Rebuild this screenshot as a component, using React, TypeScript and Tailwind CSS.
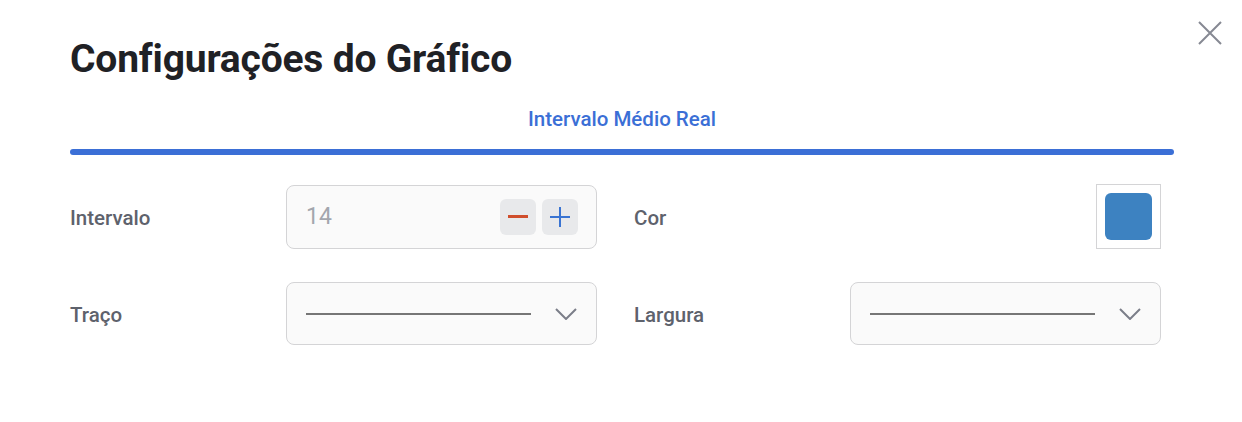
import React, { useState } from 'react';

const Chevron = () => (
  <svg width="22" height="12" viewBox="0 0 22 12" fill="none">
    <path d="M1 1l10 10L21 1" stroke="#7b7e89" strokeWidth="2" />
  </svg>
);

const LineSelect: React.FC = () => (
  <div className="w-[311px] h-[63px] rounded-lg border border-[#d4d4d6] bg-[#fafafa] flex items-center pl-[19px] pr-[19px]">
    <div className="w-[225px] h-[2px] bg-[#767676]" />
    <div className="ml-auto flex items-center">
      <Chevron />
    </div>
  </div>
);

const App: React.FC = () => {
  const [interval, setInterval] = useState(14);

  return (
    <div
      className="w-[1242px] h-[422px] bg-white relative"
      style={{ fontFamily: 'Roboto, "Liberation Sans", sans-serif' }}
    >
      {/* close */}
      <button className="absolute left-[1197px] top-[20px] w-[26px] h-[26px] flex items-center justify-center">
        <svg width="26" height="26" viewBox="0 0 26 26" fill="none">
          <path d="M2 2l22 22M24 2L2 24" stroke="#868993" strokeWidth="2" />
        </svg>
      </button>

      <div className="pl-[70px] pr-[68px] pt-[33px]">
        <h1 className="text-[39px] leading-[52px] font-bold text-[#1f2125] tracking-[-0.2px]">
          Configurações do Gráfico
        </h1>

        <div className="mt-[16px] flex flex-col items-center">
          <span className="text-[20.5px] leading-[36px] font-medium text-[#3b6fd6]">
            Intervalo Médio Real
          </span>
          <div className="mt-[12px] w-full h-[6px] rounded-full bg-[#3b6fd6]" />
        </div>

        <div className="mt-[29px] flex flex-col gap-[33px]">
          <div className="flex items-center">
            <div className="w-[216px] pt-[3px] text-[20.5px] font-medium text-[#5e626c]">Intervalo</div>
            <div className="w-[311px] h-[64px] rounded-lg border border-[#d4d4d6] bg-[#fafafa] flex items-center pl-[19px] pr-[18px]">
              <span className="pt-[1px] text-[23px] text-[#a3a6ad]">{interval}</span>
              <div className="ml-auto flex gap-[6px]">
                <button
                  onClick={() => setInterval(interval - 1)}
                  className="w-[36px] h-[36px] rounded-md bg-[#e8e9eb] flex items-center justify-center"
                >
                  <div className="w-[20px] h-[3px] bg-[#d04e2c]" />
                </button>
                <button
                  onClick={() => setInterval(interval + 1)}
                  className="w-[36px] h-[36px] rounded-md bg-[#e8e9eb] flex items-center justify-center"
                >
                  <svg width="20" height="20" viewBox="0 0 20 20">
                    <path d="M10 0v20M0 10h20" stroke="#3a74d2" strokeWidth="2" />
                  </svg>
                </button>
              </div>
            </div>
            <div className="ml-[37px] w-[216px] pt-[3px] text-[20.5px] font-medium text-[#5e626c]">Cor</div>
            <div className="w-[311px] flex justify-end">
              <div className="w-[65px] h-[65px] border border-[#d4d4d6] bg-white flex items-center justify-center">
                <div className="w-[47px] h-[47px] rounded-md bg-[#3d82c1]" />
              </div>
            </div>
          </div>

          <div className="flex items-center">
            <div className="w-[216px] pt-[3px] text-[20.5px] font-medium text-[#5e626c]">Traço</div>
            <LineSelect />
            <div className="ml-[37px] w-[216px] pt-[3px] text-[20.5px] font-medium text-[#5e626c]">Largura</div>
            <LineSelect />
          </div>
        </div>
      </div>
    </div>
  );
};

export default App;
